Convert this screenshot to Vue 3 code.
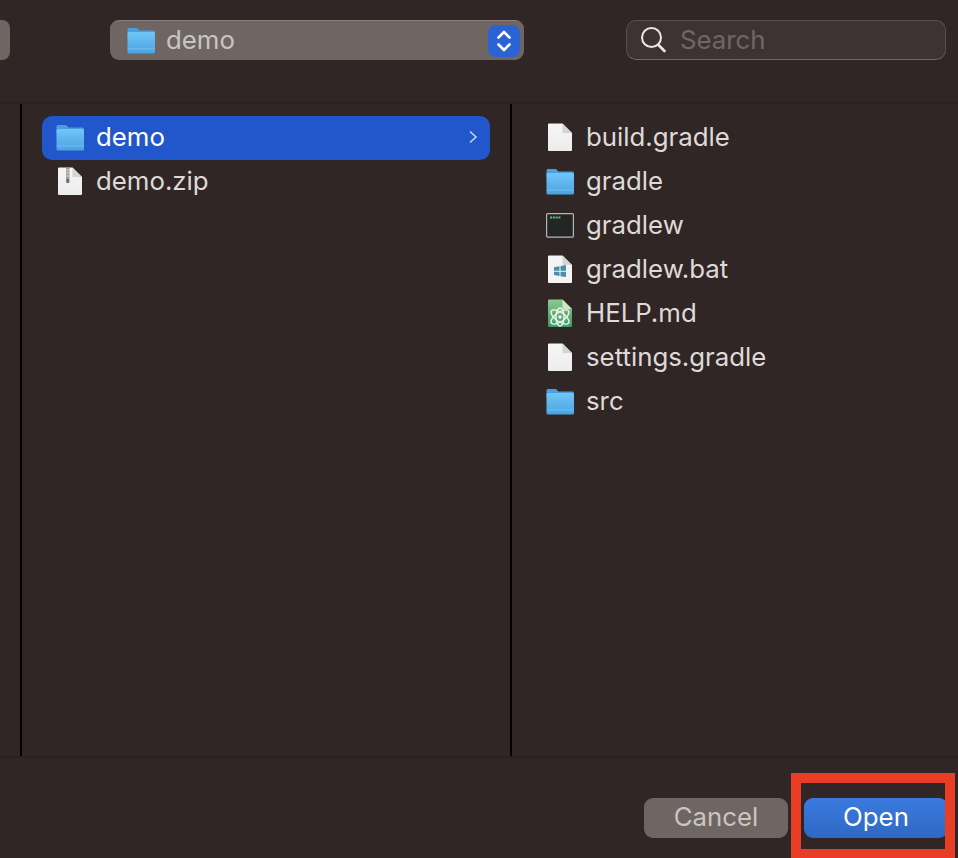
<script setup>
const middle = [
  { name: 'demo', icon: 'folder', selected: true },
  { name: 'demo.zip', icon: 'zip' },
]
const right = [
  { name: 'build.gradle', icon: 'doc' },
  { name: 'gradle', icon: 'folder' },
  { name: 'gradlew', icon: 'term' },
  { name: 'gradlew.bat', icon: 'bat' },
  { name: 'HELP.md', icon: 'atom' },
  { name: 'settings.gradle', icon: 'doc' },
  { name: 'src', icon: 'folder' },
]
const docPath = 'M3 0.500H16.500L26 10V27a1 1 0 0 1-1 1H3a1 1 0 0 1-1-1V1.500a1 1 0 0 1 1-1Z'
const foldPath = 'M16.500 0.500L26 10H17.500a1 1 0 0 1-1-1Z'
</script>

<template>
  <div class="dialog">
    <svg class="defs" aria-hidden="true">
      <defs>
        <linearGradient id="folderFront" x1="0" y1="0" x2="0" y2="1">
          <stop offset="0" stop-color="#70c6f8" />
          <stop offset="1" stop-color="#4aa3e2" />
        </linearGradient>
        <linearGradient id="paper" x1="0" y1="0" x2="0" y2="1">
          <stop offset="0" stop-color="#f6f6f6" />
          <stop offset="1" stop-color="#ececec" />
        </linearGradient>
        <linearGradient id="green" x1="0" y1="0" x2="0" y2="1">
          <stop offset="0" stop-color="#8cc98f" />
          <stop offset="1" stop-color="#3f9a66" />
        </linearGradient>
      </defs>
    </svg>

    <header class="toolbar">
      <div class="stub"></div>
      <div class="popup">
        <svg class="icon" viewBox="0 0 28 28">
          <path d="M0.500 3.500A1.500 1.500 0 0 1 2 2H9c1 0 1.500.4 2.200 1.200L12.500 4.500H26.500A1.500 1.500 0 0 1 28 6v4H0.500Z" fill="#4b9fdf" />
          <path d="M0.500 7.500A1.500 1.500 0 0 1 2 6H26.500A1.500 1.500 0 0 1 28 7.500V26a1.500 1.500 0 0 1-1.500 1.500H2A1.500 1.500 0 0 1 0.500 26Z" fill="url(#folderFront)" />
          <path d="M0.500 23H28" stroke="#8ad0f5" stroke-opacity=".55" stroke-width="1" />
        </svg>
        <span class="popup-label">demo</span>
        <span class="stepper">
          <svg viewBox="0 0 32 32" width="32" height="32">
            <path d="M10.500 12.500L16 7l5.500 5.500M10.500 19.500L16 25l5.500-5.500" fill="none" stroke="#fff" stroke-width="2.600" stroke-linecap="round" stroke-linejoin="round" />
          </svg>
        </span>
      </div>
      <div class="search">
        <svg class="search-icon" viewBox="0 0 28 28" width="28" height="28">
          <circle cx="11.500" cy="11.500" r="9.500" fill="none" stroke="#ebe7e5" stroke-width="2" />
          <path d="M18.500 19L24.500 25" stroke="#ebe7e5" stroke-width="2.600" stroke-linecap="round" />
        </svg>
        <span class="search-text">Search</span>
      </div>
    </header>

    <main class="columns">
      <section class="col col-first"></section>
      <section class="col col-middle">
        <div v-for="item in middle" :key="item.name" class="row" :class="{ selected: item.selected }">
          <svg class="icon" viewBox="0 0 28 28">
            <template v-if="item.icon === 'folder'">
              <path d="M0.500 3.500A1.500 1.500 0 0 1 2 2H9c1 0 1.500.4 2.200 1.200L12.500 4.500H26.500A1.500 1.500 0 0 1 28 6v4H0.500Z" fill="#4b9fdf" />
              <path d="M0.500 7.500A1.500 1.500 0 0 1 2 6H26.500A1.500 1.500 0 0 1 28 7.500V26a1.500 1.500 0 0 1-1.500 1.500H2A1.500 1.500 0 0 1 0.500 26Z" fill="url(#folderFront)" />
              <path d="M0.500 23H28" stroke="#8ad0f5" stroke-opacity=".55" stroke-width="1" />
            </template>
            <template v-else>
              <path :d="docPath" fill="url(#paper)" />
              <path :d="foldPath" fill="#d4d4d4" />
              <rect x="10" y="0.500" width="3.500" height="15" fill="#9a9a9a" />
              <rect x="10.500" y="12" width="2.500" height="4" rx="1" fill="#6a6a6a" />
              <path d="M10 3h3.500M10 6h3.500M10 9h3.500" stroke="#dcdcdc" stroke-width="1" />
            </template>
          </svg>
          <span class="name">{{ item.name }}</span>
          <svg v-if="item.selected" class="chev" viewBox="0 0 10 14" width="10" height="14">
            <path d="M2 1.500L8 7l-6 5.500" fill="none" stroke="#c9d6f3" stroke-width="1.500" />
          </svg>
        </div>
      </section>
      <section class="col col-last">
        <div v-for="item in right" :key="item.name" class="row">
          <svg class="icon" viewBox="0 0 28 28">
            <template v-if="item.icon === 'folder'">
              <path d="M0.500 3.500A1.500 1.500 0 0 1 2 2H9c1 0 1.500.4 2.200 1.200L12.500 4.500H26.500A1.500 1.500 0 0 1 28 6v4H0.500Z" fill="#4b9fdf" />
              <path d="M0.500 7.500A1.500 1.500 0 0 1 2 6H26.500A1.500 1.500 0 0 1 28 7.500V26a1.500 1.500 0 0 1-1.500 1.500H2A1.500 1.500 0 0 1 0.500 26Z" fill="url(#folderFront)" />
              <path d="M0.500 23H28" stroke="#8ad0f5" stroke-opacity=".55" stroke-width="1" />
            </template>
            <template v-else-if="item.icon === 'term'">
              <rect x="0.600" y="2.600" width="26.800" height="23.500" rx="1" fill="#232625" stroke="#b4b6b6" stroke-width="1.200" />
              <path d="M4 6.500h11" stroke="#5fbf6e" stroke-width="2.200" stroke-dasharray="2 .8" />
            </template>
            <template v-else-if="item.icon === 'bat'">
              <path :d="docPath" fill="#f4f4f4" />
              <path :d="foldPath" fill="#d4d4d4" />
              <path d="M8 12.200L13.500 11.200V15.700H8ZM14.500 11L20 10V15.700H14.500ZM8 16.700H13.500V21L8 20ZM14.500 16.700H20V22L14.500 21.200Z" fill="#4a8fa8" />
            </template>
            <template v-else-if="item.icon === 'atom'">
              <path :d="docPath" fill="url(#green)" />
              <path :d="foldPath" fill="#cfe6c8" />
              <g fill="none" stroke="#f2f7ef" stroke-width="1.300">
                <ellipse cx="14" cy="18" rx="10.500" ry="4.500" transform="rotate(35 14 18)" />
                <ellipse cx="14" cy="18" rx="10.500" ry="4.500" transform="rotate(-35 14 18)" />
                <ellipse cx="14" cy="18" rx="9" ry="4" transform="rotate(90 14 18)" />
              </g>
              <circle cx="14" cy="18" r="1.700" fill="#f2f7ef" />
            </template>
            <template v-else>
              <path :d="docPath" fill="url(#paper)" />
              <path :d="foldPath" fill="#d4d4d4" />
            </template>
          </svg>
          <span class="name">{{ item.name }}</span>
        </div>
      </section>
    </main>

    <footer class="footer">
      <div class="btn cancel">Cancel</div>
      <div class="btn open">Open</div>
    </footer>
    <div class="highlight"></div>
  </div>
</template>

<style scoped>
.dialog {
  position: relative;
  width: 958px;
  height: 858px;
  background: #302625;
  overflow: hidden;
  display: flex;
  flex-direction: column;
  font-family: Inter, "Liberation Sans", sans-serif;
  font-size: 25.8px;
}
.defs {
  position: absolute;
  width: 0;
  height: 0;
}
.toolbar {
  height: 104px;
  box-sizing: border-box;
  flex: none;
  display: flex;
  align-items: flex-start;
  padding-top: 20px;
  border-bottom: 2px solid #262322;
}
.stub {
  width: 10px;
  height: 40px;
  background: #6f6563;
  border-radius: 0 8px 8px 0;
}
.popup {
  margin-left: 100px;
  width: 414px;
  height: 40px;
  box-sizing: border-box;
  padding: 0 4px 0 18px;
  display: flex;
  align-items: center;
  gap: 11px;
  background: #6f6563;
  border-top: 1px solid #8a807d;
  border-radius: 9px;
}
.popup-label {
  flex: 1;
  color: #c9c5c3;
  padding-bottom: 3px;
}
.popup .icon {
  margin-top: -1px;
  margin-left: -1px;
}
.stepper {
  width: 32px;
  height: 32px;
  border-radius: 8px;
  background: #2b62d4;
}
.stepper svg {
  display: block;
}
.search {
  margin-left: 102px;
  width: 320px;
  height: 40px;
  box-sizing: border-box;
  padding-left: 13px;
  display: flex;
  align-items: center;
  gap: 12px;
  background: #3e3333;
  border: 1px solid #5a4f4e;
  border-bottom-color: #6f6563;
  border-radius: 10px;
}
.search-text {
  color: #706664;
  padding-bottom: 1px;
}
.columns {
  flex: 1;
  display: flex;
  min-height: 0;
}
.col {
  box-sizing: border-box;
  padding-top: 12px;
}
.col-first {
  width: 22px;
  border-right: 2px solid #000;
}
.col-middle {
  width: 490px;
  padding-left: 20px;
  padding-right: 20px;
  border-right: 2px solid #000;
}
.col-last {
  flex: 1;
  padding-left: 34px;
}
.row {
  height: 44px;
  box-sizing: border-box;
  padding-bottom: 2px;
  display: flex;
  align-items: center;
  gap: 12px;
  color: #dedad8;
}
.col-middle .row {
  padding: 0 12px 2px 14px;
  border-radius: 10px;
}
.row.selected {
  background: #2257cb;
  color: #fff;
}
.icon {
  width: 28px;
  height: 28px;
  flex: none;
}
.name {
  flex: 1;
  padding-bottom: 2px;
}
.chev {
  flex: none;
}
.footer {
  height: 102px;
  flex: none;
  box-sizing: border-box;
  border-top: 2px solid #262322;
  padding: 40px 12px 0 0;
  display: flex;
  justify-content: flex-end;
  align-items: flex-start;
  gap: 16px;
}
.btn {
  height: 40px;
  line-height: 38px;
  text-align: center;
  border-radius: 9px;
}
.cancel {
  width: 144px;
  background: #6f6563;
  color: #c9c5c3;
}
.open {
  width: 144px;
  background: linear-gradient(#3a7ae0, #2f68c2);
  color: #fff;
  margin-right: -2px;
}
.highlight {
  position: absolute;
  left: 791px;
  top: 773px;
  width: 164px;
  height: 85px;
  box-sizing: border-box;
  border: 10px solid #e83e25;
  border-bottom-width: 9px;
}
</style>
